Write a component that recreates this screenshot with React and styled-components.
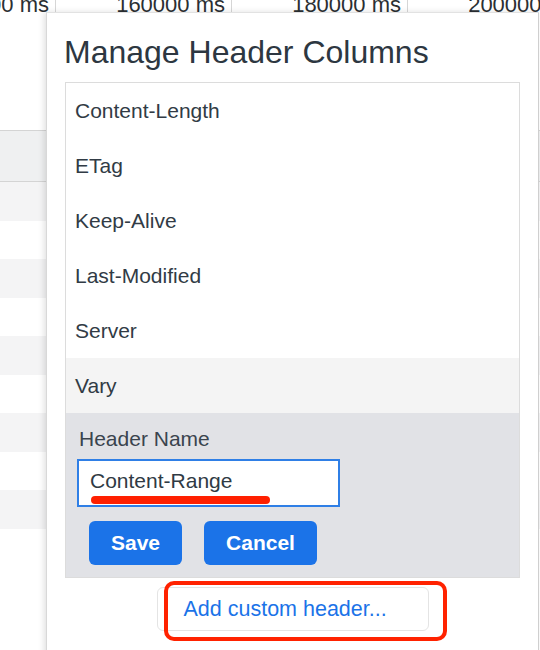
import React from 'react'
import styled, { createGlobalStyle } from 'styled-components'

const GlobalStyle = createGlobalStyle`
  html, body {
    margin: 0;
    padding: 0;
    background: #fff;
    overflow: hidden;
  }
  body {
    font-family: "Liberation Sans", Arial, sans-serif;
  }
`

const Page = styled.div`
  position: relative;
  width: 540px;
  height: 650px;
  overflow: hidden;
  background: #fff;
`

const Axis = styled.div`
  display: flex;
  height: 12px;
  margin-left: -120px;
  overflow: hidden;
`

const Tick = styled.div`
  flex: 0 0 176px;
  box-sizing: border-box;
  border-right: 1px solid #d6d6d6;
  padding-right: 6px;
  text-align: right;
  white-space: nowrap;
  font-size: 22px;
  line-height: 22px;
  color: #2b2f33;
  margin-top: -6px;
  height: 20px;
`

const Table = styled.div`
  margin-top: 118px;
  display: flex;
  flex-direction: column;
`

const TableHead = styled.div`
  height: 50px;
  background: #eff0f1;
  border-top: 1px solid #d4d4d4;
  border-bottom: 1px solid #d4d4d4;
`

const TableRow = styled.div`
  height: 38.5px;
  background: ${(p) => (p.$alt ? '#f4f4f5' : '#fff')};
`

const Modal = styled.div`
  position: absolute;
  left: 46px;
  top: 12px;
  width: 493px;
  height: 660px;
  box-sizing: border-box;
  padding: 20px 18px 0;
  background: #fff;
  border-left: 1px solid #d8d8d8;
  border-top: 1px solid #e2e2e2;
  border-right: 1px solid #cfcfcf;
  box-shadow: -2px 0 6px rgba(0, 0, 0, 0.12);
  display: flex;
  flex-direction: column;
  align-items: stretch;
`

const Title = styled.h2`
  margin: 0 0 11px -1px;
  font-size: 32px;
  line-height: 38px;
  font-weight: 400;
  color: #2d3741;
`

const ListBox = styled.div`
  border: 1px solid #dcdcdc;
  display: flex;
  flex-direction: column;
`

const Item = styled.div`
  height: 55px;
  line-height: 55px;
  padding-left: 9px;
  font-size: 21px;
  color: #313b45;
  background: ${(p) => (p.$active ? '#f4f4f4' : '#fff')};
`

const Form = styled.div`
  background: #e1e2e6;
  padding: 14px 13px 12px;
  display: flex;
  flex-direction: column;
  align-items: flex-start;
`

const Label = styled.label`
  font-size: 21px;
  line-height: 24px;
  color: #3a444e;
  margin-bottom: 8px;
`

const InputWrap = styled.div`
  position: relative;
  margin-left: -2px;
`

const Input = styled.input`
  display: block;
  width: 263px;
  height: 48px;
  box-sizing: border-box;
  border: 2px solid #2f7fe6;
  padding: 0 0 4px 11px;
  font-family: "Liberation Sans", Arial, sans-serif;
  font-size: 21px;
  color: #2f3a44;
  background: #fff;
  outline: none;
`

const Underline = styled.span`
  position: absolute;
  left: 14px;
  top: 37px;
  width: 179px;
  height: 8px;
  border-radius: 4px;
  background: #ff2000;
`

const Buttons = styled.div`
  display: flex;
  gap: 22px;
  margin: 14px 0 0 10px;
`

const Primary = styled.button`
  height: 44px;
  padding: 0 22px;
  border: none;
  border-radius: 6px;
  background: #1b73e8;
  color: #fff;
  font-family: "Liberation Sans", Arial, sans-serif;
  font-size: 21px;
  font-weight: 700;
`

const Footer = styled.div`
  display: flex;
  justify-content: center;
  margin-top: 9px;
`

const AddWrap = styled.div`
  position: relative;
`

const AddButton = styled.button`
  width: 272px;
  height: 44px;
  box-sizing: border-box;
  padding: 0 0 0 26px;
  text-align: left;
  background: #fff;
  border: 1px solid #e4e4e4;
  border-radius: 6px;
  color: #1b73e8;
  font-family: "Liberation Sans", Arial, sans-serif;
  font-size: 21.5px;
`

const Highlight = styled.span`
  position: absolute;
  left: 7px;
  top: -6px;
  width: 283px;
  height: 60px;
  box-sizing: border-box;
  border: 4px solid #ff2200;
  border-radius: 10px;
  pointer-events: none;
`

const ticks = ['140000 ms', '160000 ms', '180000 ms', '200000 ms']
const headers = ['Content-Length', 'ETag', 'Keep-Alive', 'Last-Modified', 'Server', 'Vary']

export default function App() {
  return (
    <>
      <GlobalStyle />
      <Page>
        <Axis>
          {ticks.map((t) => (
            <Tick key={t}>{t}</Tick>
          ))}
        </Axis>
        <Table>
          <TableHead />
          {Array.from({ length: 9 }).map((_, i) => (
            <TableRow key={i} $alt={i % 2 === 0} />
          ))}
        </Table>

        <Modal>
          <Title>Manage Header Columns</Title>
          <ListBox>
            {headers.map((h) => (
              <Item key={h} $active={h === 'Vary'}>
                {h}
              </Item>
            ))}
            <Form>
              <Label>Header Name</Label>
              <InputWrap>
                <Input value="Content-Range" readOnly />
                <Underline />
              </InputWrap>
              <Buttons>
                <Primary>Save</Primary>
                <Primary>Cancel</Primary>
              </Buttons>
            </Form>
          </ListBox>
          <Footer>
            <AddWrap>
              <AddButton>Add custom header...</AddButton>
              <Highlight />
            </AddWrap>
          </Footer>
        </Modal>
      </Page>
    </>
  )
}
